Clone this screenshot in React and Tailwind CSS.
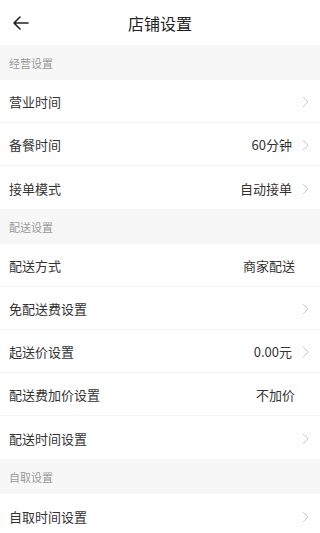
import React from "react";

const font = { fontFamily: '"Noto Sans CJK SC", "Noto Sans", sans-serif' };

function Chevron() {
  return (
    <svg width="7" height="12" viewBox="0 0 7 12" className="ml-[10px] shrink-0">
      <path d="M1 1 L6 6 L1 11" fill="none" stroke="#c8c8c8" strokeWidth="1" />
    </svg>
  );
}

function Row({ label, value, arrow = true, last = false }) {
  return (
    <div className={`flex items-center h-[43px] pt-[2px] pl-[9px] pr-[11px] bg-white ${last ? "" : "border-b border-[#f3f3f3]"}`}>
      <span className="text-[13px] text-[#333] flex-1">{label}</span>
      {value && <span className={`text-[13px] text-[#333] ${arrow ? "" : "mr-[14px]"}`}>{value}</span>}
      {arrow && <Chevron />}
    </div>
  );
}

function Section({ title }) {
  return (
    <div className="h-[35px] pt-[1px] flex items-center pl-[9px] bg-[#f7f7f7] text-[11px] text-[#999]">{title}</div>
  );
}

export default function App() {
  return (
    <div className="w-[320px] h-[533px] overflow-hidden bg-white" style={font}>
      <div className="h-[45px] flex items-center relative bg-white">
        <svg width="18" height="16" viewBox="0 0 18 16" className="absolute left-[12px] top-[15px]">
          <path d="M16 8 H2 M8 2 L2 8 L8 14" fill="none" stroke="#222" strokeWidth="1.6" strokeLinecap="round" strokeLinejoin="round" />
        </svg>
        <div className="flex-1 text-center text-[16px] text-[#222]">店铺设置</div>
      </div>
      <Section title="经营设置" />
      <Row label="营业时间" />
      <Row label="备餐时间" value="60分钟" />
      <Row label="接单模式" value="自动接单" last />
      <Section title="配送设置" />
      <Row label="配送方式" value="商家配送" arrow={false} />
      <Row label="免配送费设置" />
      <Row label="起送价设置" value="0.00元" />
      <Row label="配送费加价设置" value="不加价" arrow={false} />
      <Row label="配送时间设置" last />
      <Section title="自取设置" />
      <Row label="自取时间设置" last />
    </div>
  );
}
